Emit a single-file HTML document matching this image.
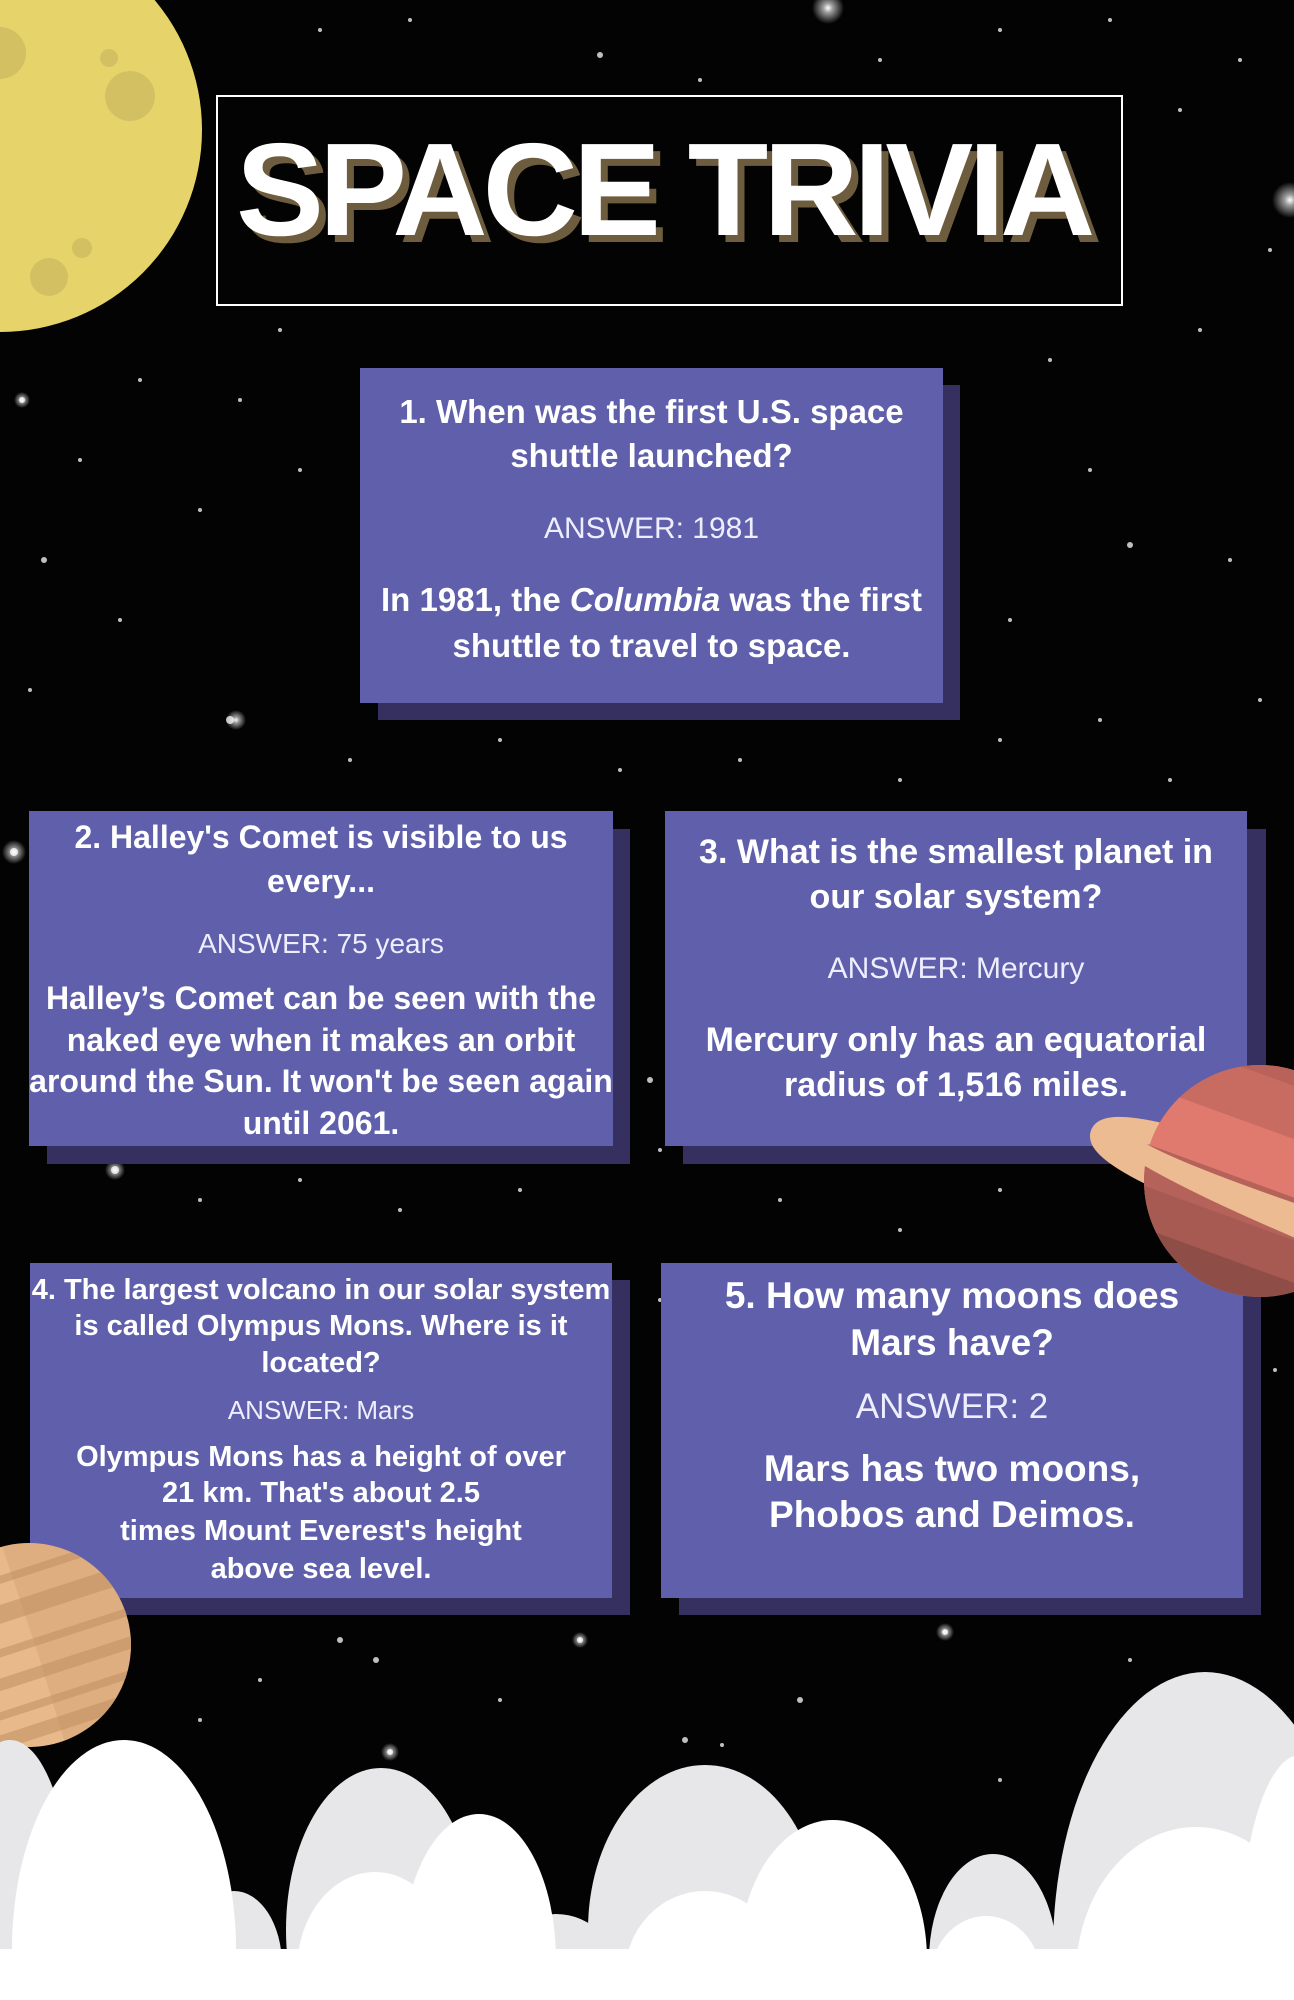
<!DOCTYPE html>
<html><head><meta charset="utf-8"><style>
html,body{margin:0;padding:0}
body{width:1294px;height:2000px;position:relative;overflow:hidden;background:#030303;font-family:"Liberation Sans",sans-serif;color:#fff}
.sh{position:absolute;background:#35305f}
.card{position:absolute;background:#5f5fab;text-align:center;overflow:visible}
.t{position:absolute;left:-20px;right:-20px;text-align:center;white-space:nowrap;font-weight:bold}
.a{font-weight:normal;color:#eef}
</style></head><body>
<svg width="1294" height="2000" style="position:absolute;left:0;top:0">
<defs><radialGradient id="g"><stop offset="0" stop-color="#fff"/><stop offset=".3" stop-color="#fff" stop-opacity=".6"/><stop offset="1" stop-color="#fff" stop-opacity="0"/></radialGradient></defs>
<g fill="#fff" opacity=".75">
<circle cx="320" cy="30" r="2"/><circle cx="410" cy="20" r="2"/><circle cx="600" cy="55" r="3"/><circle cx="700" cy="80" r="2"/><circle cx="880" cy="60" r="2"/><circle cx="1000" cy="30" r="2"/><circle cx="1110" cy="20" r="2"/><circle cx="1180" cy="110" r="2"/><circle cx="1240" cy="60" r="2"/><circle cx="1270" cy="250" r="2"/><circle cx="1200" cy="330" r="2"/><circle cx="1050" cy="360" r="2"/><circle cx="280" cy="330" r="2"/><circle cx="240" cy="400" r="2"/><circle cx="140" cy="380" r="2"/><circle cx="22" cy="400" r="3"/><circle cx="80" cy="460" r="2"/><circle cx="44" cy="560" r="3"/><circle cx="200" cy="510" r="2"/><circle cx="300" cy="470" r="2"/><circle cx="120" cy="620" r="2"/><circle cx="230" cy="720" r="4"/><circle cx="30" cy="690" r="2"/><circle cx="350" cy="760" r="2"/><circle cx="500" cy="740" r="2"/><circle cx="620" cy="770" r="2"/><circle cx="740" cy="760" r="2"/><circle cx="900" cy="780" r="2"/><circle cx="1000" cy="740" r="2"/><circle cx="1100" cy="720" r="2"/><circle cx="1170" cy="780" r="2"/><circle cx="1260" cy="700" r="2"/><circle cx="1010" cy="620" r="2"/><circle cx="1090" cy="470" r="2"/><circle cx="1130" cy="545" r="3"/><circle cx="1230" cy="560" r="2"/><circle cx="14" cy="852" r="4"/><circle cx="650" cy="1080" r="3"/><circle cx="660" cy="1150" r="2"/><circle cx="115" cy="1170" r="4"/><circle cx="200" cy="1200" r="2"/><circle cx="300" cy="1180" r="2"/><circle cx="400" cy="1210" r="2"/><circle cx="520" cy="1190" r="2"/><circle cx="780" cy="1200" r="2"/><circle cx="900" cy="1230" r="2"/><circle cx="1000" cy="1190" r="2"/><circle cx="660" cy="1300" r="2"/><circle cx="1275" cy="1370" r="2"/><circle cx="340" cy="1640" r="3"/><circle cx="376" cy="1660" r="3"/><circle cx="580" cy="1640" r="3"/><circle cx="945" cy="1632" r="3"/><circle cx="1130" cy="1660" r="2"/><circle cx="800" cy="1700" r="3"/><circle cx="390" cy="1752" r="3"/><circle cx="685" cy="1740" r="3"/><circle cx="722" cy="1745" r="2"/><circle cx="260" cy="1680" r="2"/><circle cx="500" cy="1700" r="2"/><circle cx="1000" cy="1780" r="2"/><circle cx="1180" cy="1700" r="2"/><circle cx="200" cy="1720" r="2"/>
</g>
<circle cx="828" cy="8" r="16" fill="url(#g)"/><circle cx="1290" cy="200" r="18" fill="url(#g)"/><circle cx="22" cy="400" r="8" fill="url(#g)"/><circle cx="14" cy="852" r="12" fill="url(#g)"/><circle cx="236" cy="720" r="10" fill="url(#g)"/><circle cx="115" cy="1170" r="10" fill="url(#g)"/><circle cx="945" cy="1632" r="9" fill="url(#g)"/><circle cx="390" cy="1752" r="9" fill="url(#g)"/><circle cx="580" cy="1640" r="8" fill="url(#g)"/>
<circle cx="0" cy="130" r="202" fill="#e6d46a"/>
<g fill="#d3c063"><circle cx="0" cy="53" r="26"/><circle cx="109" cy="58" r="9"/><circle cx="130" cy="96" r="25"/><circle cx="82" cy="248" r="10"/><circle cx="49" cy="277" r="19"/></g>
<rect x="217" y="96" width="905" height="209" fill="none" stroke="#fff" stroke-width="2"/>
</svg>
<div style="position:absolute;left:236px;top:120px;width:880px;font-weight:bold;font-size:132px;letter-spacing:-5px;line-height:140px;white-space:nowrap;color:#fff;text-shadow:7px 7px 0 #6d5d3e">SPACE TRIVIA</div>

<div class="sh" style="left:378px;top:385px;width:582px;height:335px"></div>
<div class="card" style="left:360px;top:368px;width:583px;height:335px">
<div class="t" style="top:25px;font-size:33px">1. When was the first U.S. space</div>
<div class="t" style="top:69px;font-size:33px">shuttle launched?</div>
<div class="t a" style="top:144px;font-size:30px">ANSWER: 1981</div>
<div class="t" style="top:213px;font-size:33px">In 1981, the <i>Columbia</i> was the first</div>
<div class="t" style="top:259px;font-size:33px">shuttle to travel to space.</div>
</div>

<div class="sh" style="left:47px;top:829px;width:583px;height:335px"></div>
<div class="card" style="left:29px;top:811px;width:584px;height:335px">
<div class="t" style="top:8px;font-size:32px">2. Halley's Comet is visible to us</div>
<div class="t" style="top:52px;font-size:32px">every...</div>
<div class="t a" style="top:117px;font-size:28px">ANSWER: 75 years</div>
<div class="t" style="top:169px;font-size:32px">Halley’s Comet can be seen with the</div>
<div class="t" style="top:211px;font-size:32px">naked eye when it makes an orbit</div>
<div class="t" style="top:252px;font-size:32px">around the Sun. It won't be seen again</div>
<div class="t" style="top:294px;font-size:32px">until 2061.</div>
</div>

<div class="sh" style="left:683px;top:829px;width:583px;height:335px"></div>
<div class="card" style="left:665px;top:811px;width:582px;height:335px">
<div class="t" style="top:22px;font-size:34px">3. What is the smallest planet in</div>
<div class="t" style="top:67px;font-size:34px">our solar system?</div>
<div class="t a" style="top:141px;font-size:30px">ANSWER: Mercury</div>
<div class="t" style="top:210px;font-size:34px">Mercury only has an equatorial</div>
<div class="t" style="top:255px;font-size:34px">radius of 1,516 miles.</div>
</div>

<div class="sh" style="left:48px;top:1280px;width:582px;height:335px"></div>
<div class="card" style="left:30px;top:1263px;width:582px;height:335px">
<div class="t" style="top:11px;font-size:29px">4. The largest volcano in our solar system</div>
<div class="t" style="top:47px;font-size:29px">is called Olympus Mons. Where is it</div>
<div class="t" style="top:84px;font-size:29px">located?</div>
<div class="t a" style="top:132px;font-size:26px">ANSWER: Mars</div>
<div class="t" style="top:178px;font-size:29px">Olympus Mons has a height of over</div>
<div class="t" style="top:214px;font-size:29px">21 km. That's about 2.5</div>
<div class="t" style="top:252px;font-size:29px">times Mount Everest's height</div>
<div class="t" style="top:290px;font-size:29px">above sea level.</div>
</div>

<div class="sh" style="left:679px;top:1280px;width:582px;height:335px"></div>
<div class="card" style="left:661px;top:1263px;width:582px;height:335px">
<div class="t" style="top:12px;font-size:37px">5. How many moons does</div>
<div class="t" style="top:59px;font-size:37px">Mars have?</div>
<div class="t a" style="top:124px;font-size:35px">ANSWER: 2</div>
<div class="t" style="top:185px;font-size:37px">Mars has two moons,</div>
<div class="t" style="top:231px;font-size:37px">Phobos and Deimos.</div>
</div>

<svg width="1294" height="2000" style="position:absolute;left:0;top:0">
<defs>
<clipPath id="sat"><circle cx="1260" cy="1181" r="116"/></clipPath>
<clipPath id="pl"><circle cx="29" cy="1645" r="102"/></clipPath>
</defs>
<g transform="rotate(20 1200 1170)"><ellipse cx="1200" cy="1170" rx="104" ry="22" fill="none" stroke="#edbb92" stroke-width="24"/></g>
<g clip-path="url(#sat)">
<rect x="1140" y="1060" width="160" height="250" fill="#c86c62"/>
<g transform="rotate(20 1260 1181)">
<rect x="1100" y="1050" width="320" height="30" fill="#b8625a"/>
<rect x="1100" y="1130" width="320" height="55" fill="#e07a6e"/>
<rect x="1100" y="1185" width="320" height="40" fill="#b5635a"/>
<rect x="1100" y="1225" width="320" height="40" fill="#a65a51"/>
<rect x="1100" y="1265" width="320" height="60" fill="#8f4d47"/>
</g></g>
<path d="M1100 1135 Q1140 1172 1300 1240 L1300 1205 Q1170 1160 1140 1140 Z" fill="#edbb92"/>
<g clip-path="url(#pl)">
<rect x="-80" y="1540" width="220" height="210" fill="#e8b98a"/>
<g fill="#d1a273" transform="rotate(-18 29 1645)">
<rect x="-90" y="1570" width="240" height="8"/><rect x="-90" y="1598" width="240" height="18"/><rect x="-90" y="1640" width="240" height="8"/><rect x="-90" y="1668" width="240" height="12"/><rect x="-90" y="1700" width="240" height="8"/><rect x="-90" y="1722" width="240" height="14"/>
</g>
<path d="M0 1540 L20 1600 L40 1660 L70 1760 L140 1760 L140 1540Z" fill="#c39063" opacity=".25"/>
</g>
<g fill="#e7e7e9">
<ellipse cx="10" cy="1900" rx="60" ry="160"/>
<ellipse cx="381" cy="1930" rx="95" ry="162"/>
<ellipse cx="705" cy="1930" rx="117" ry="165"/>
<ellipse cx="234" cy="1965" rx="48" ry="74"/>
<ellipse cx="556" cy="1980" rx="64" ry="66"/>
<ellipse cx="993" cy="1960" rx="64" ry="106"/>
<ellipse cx="1205" cy="1950" rx="152" ry="278"/>
</g>
<g fill="#fff">
<ellipse cx="124" cy="1950" rx="112" ry="210"/>
<ellipse cx="479" cy="1960" rx="77" ry="146"/>
<ellipse cx="375" cy="1970" rx="78" ry="98"/>
<ellipse cx="833" cy="1960" rx="94" ry="140"/>
<ellipse cx="705" cy="1975" rx="80" ry="84"/>
<ellipse cx="986" cy="1980" rx="56" ry="64"/>
<ellipse cx="1196" cy="1975" rx="120" ry="148"/>
<ellipse cx="1300" cy="1950" rx="60" ry="195"/>
<rect x="0" y="1949" width="1294" height="51"/>
</g>
</svg>
</body></html>
